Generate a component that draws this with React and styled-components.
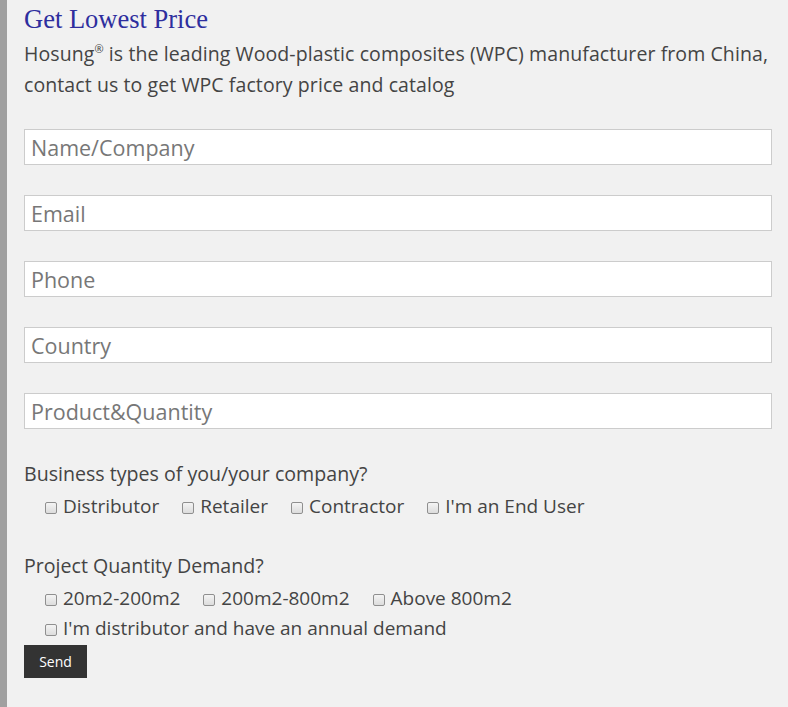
import React from "react";
import styled, { createGlobalStyle } from "styled-components";

const GlobalStyle = createGlobalStyle`
  html, body {
    margin: 0;
    padding: 0;
    background: #f1f1f1;
  }
`;

const Panel = styled.div`
  width: 788px;
  height: 707px;
  box-sizing: border-box;
  background: #f1f1f1;
  border-left: 7px solid #a0a0a0;
  padding: 0 16px 0 17px;
  font-family: "Open Sans", "Noto Sans", sans-serif;
  color: #444;
  overflow: hidden;
`;

const Title = styled.h3`
  margin: 0;
  font-family: "Liberation Serif", "Times New Roman", serif;
  font-weight: normal;
  font-size: 26.5px;
  line-height: 38px;
  color: #2e2e9e;
`;

const Intro = styled.p`
  margin: 0 0 29px;
  font-size: 19.5px;
  letter-spacing: 0.09px;
  line-height: 31px;
  color: #444;
  sup {
    font-size: 11px;
    vertical-align: 8px;
    line-height: 0;
  }
`;

const Field = styled.input`
  display: block;
  width: 100%;
  height: 36px;
  box-sizing: border-box;
  margin: 0 0 30px;
  padding: 0 6px;
  border: 1px solid #cccccc;
  background: #fff;
  font-family: "Open Sans", "Noto Sans", sans-serif;
  font-size: 21.5px;
  color: #444;
  outline: none;
  &::placeholder {
    color: #777;
  }
`;

const Question = styled.div`
  font-size: 19.6px;
  line-height: 30px;
  margin-top: ${(p) => (p.$spaced ? "30px" : "0")};
`;

const OptionRow = styled.div`
  display: flex;
  align-items: center;
  height: 30px;
  padding-left: 19px;
  margin-top: ${(p) => (p.$first ? "2px" : "0")};
`;

const Option = styled.label`
  display: flex;
  align-items: center;
  margin-right: 21px;
  font-size: 19px;
  color: #444;
`;

const Check = styled.input.attrs({ type: "checkbox" })`
  appearance: none;
  box-sizing: border-box;
  width: 12px;
  height: 12px;
  margin: 3px 6px 0 2px;
  border: 1px solid #8f8f8f;
  border-radius: 2px;
  background: linear-gradient(#f4f4f4, #dcdcdc);
  &:checked {
    background: #dcdcdc;
  }
`;

const SendButton = styled.button`
  display: block;
  margin-top: 2px;
  width: 63px;
  height: 33px;
  border: none;
  background: #333;
  color: #fff;
  font-family: "Open Sans", "Noto Sans", sans-serif;
  font-size: 14px;
  padding: 0;
  cursor: pointer;
`;

const FIELDS = ["Name/Company", "Email", "Phone", "Country", "Product&Quantity"];
const BUSINESS = ["Distributor", "Retailer", "Contractor", "I'm an End User"];
const QUANTITY = ["20m2-200m2", "200m2-800m2", "Above 800m2"];

export default function App() {
  return (
    <>
      <GlobalStyle />
      <Panel>
        <Title>Get Lowest Price</Title>
        <Intro>
          Hosung<sup>®</sup> is the leading Wood-plastic composites (WPC)
          manufacturer from China, contact us to get WPC factory price and
          catalog
        </Intro>
        {FIELDS.map((f) => (
          <Field key={f} placeholder={f} />
        ))}
        <Question>Business types of you/your company?</Question>
        <OptionRow $first>
          {BUSINESS.map((b) => (
            <Option key={b}>
              <Check />
              {b}
            </Option>
          ))}
        </OptionRow>
        <Question $spaced>Project Quantity Demand?</Question>
        <OptionRow $first>
          {QUANTITY.map((q) => (
            <Option key={q}>
              <Check />
              {q}
            </Option>
          ))}
        </OptionRow>
        <OptionRow>
          <Option>
            <Check />
            I'm distributor and have an annual demand
          </Option>
        </OptionRow>
        <SendButton>Send</SendButton>
      </Panel>
    </>
  );
}
